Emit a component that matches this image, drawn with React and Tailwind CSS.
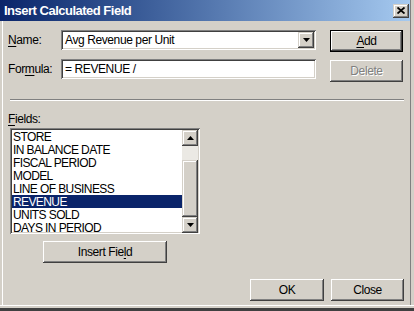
import React from 'react'

const raised = 'shadow-[inset_-1px_-1px_#404040,inset_1px_1px_#fff,inset_-2px_-2px_#808080]'
const raisedDefault = 'shadow-[inset_0_0_0_1px_#000,inset_-2px_-2px_#404040,inset_2px_2px_#fff,inset_-3px_-3px_#808080]'
const sunken = 'shadow-[inset_1px_1px_#808080,inset_-1px_-1px_#fff,inset_2px_2px_#404040,inset_-2px_-2px_#d4d0c8]'
const scrollBtn = 'shadow-[inset_-1px_-1px_#404040,inset_1px_1px_#d4d0c8,inset_-2px_-2px_#808080,inset_2px_2px_#fff]'

function Btn({ children, className = '', isDefault, disabled }) {
  return (
    <button
      className={`flex items-center justify-center bg-[#d4d0c8] text-[12px] tracking-[-0.4px] leading-none ${isDefault ? raisedDefault : raised} ${disabled ? 'text-[#808080] [text-shadow:1px_1px_0_#fff]' : 'text-black'} ${className}`}
    >
      {children}
    </button>
  )
}

function Arrow({ dir }) {
  return (
    <svg width="7" height="4" viewBox="0 0 7 4">
      {dir === 'up' ? <path d="M3.5 0 L7 4 L0 4 Z" fill="#000" /> : <path d="M0 0 L7 0 L3.5 4 Z" fill="#000" />}
    </svg>
  )
}

const fields = ['STORE', 'IN BALANCE DATE', 'FISCAL PERIOD', 'MODEL', 'LINE OF BUSINESS', 'REVENUE', 'UNITS SOLD', 'DAYS IN PERIOD']

export default function App() {
  return (
    <div className="w-[414px] h-[311px] overflow-hidden bg-[#d4d0c8] font-['Liberation_Sans',Arial,sans-serif] text-black shadow-[inset_0_-3px_#404040,inset_0_-5px_#d4d0c8,inset_0_-6px_#fff,inset_-3px_0_#d4d0c8,inset_-4px_0_#808080,inset_2px_0_#d4d0c8,inset_3px_0_#fff]">
      {/* Title bar */}
      <div className="h-[21px] mr-[4px] flex items-center justify-between bg-gradient-to-r from-[#0a246a] to-[#a6caf0] pl-[4px] pr-[1px]">
        <span className="text-white font-bold text-[13px] tracking-[-0.5px] leading-none">Insert Calculated Field</span>
        <div className={`w-[16px] h-[14px] flex items-center justify-center bg-[#d4d0c8] ${scrollBtn}`}>
          <svg width="8" height="7" viewBox="0 0 8 7">
            <path d="M0.5 0.5 L7.5 6.5 M7.5 0.5 L0.5 6.5" stroke="#000" strokeWidth="1.8" />
          </svg>
        </div>
      </div>

      <div className="pl-[8px] pr-[10px] pt-[9px] text-[12px] tracking-[-0.4px]">
        {/* Name row */}
        <div className="flex items-start">
          <div className="w-[53px] h-[20px] flex items-center">
            <span><u className="underline-offset-[2px]">N</u>ame:</span>
          </div>
          <div className={`w-[255px] h-[20px] bg-white flex items-center justify-between pl-[4px] pr-[2px] ${sunken}`}>
            <span>Avg Revenue per Unit</span>
            <div className={`w-[16px] h-[16px] flex items-center justify-center bg-[#d4d0c8] ${scrollBtn}`}>
              <Arrow dir="down" />
            </div>
          </div>
          <Btn isDefault className="ml-[14px] w-[73px] h-[22px]">
            <span><u className="underline-offset-[2px]">A</u>dd</span>
          </Btn>
        </div>

        {/* Formula row */}
        <div className="flex items-start mt-[7px]">
          <div className="w-[53px] h-[20px] flex items-center">
            <span>For<u className="underline-offset-[2px]">m</u>ula:</span>
          </div>
          <div className={`w-[255px] h-[20px] bg-white flex items-center pl-[4px] ${sunken}`}>
            <span>= REVENUE /</span>
          </div>
          <Btn disabled className="ml-[14px] mt-[1px] w-[73px] h-[22px]">
            Delete
          </Btn>
        </div>

        {/* Separator */}
        <div className="mt-[17px] ml-[2px] w-[394px] border-t border-t-[#808080] border-b border-b-white" />

        {/* Fields */}
        <div className="mt-[11px] h-[13px] flex items-center">
          <span><u className="underline-offset-[2px]">F</u>ields:</span>
        </div>
        <div className={`mt-[3px] ml-[2px] w-[190px] h-[106px] bg-white p-[2px] flex overflow-hidden ${sunken}`}>
          <div className="w-[170px] flex flex-col">
            {fields.map((f) => (
              <div
                key={f}
                className={`h-[13px] shrink-0 flex items-center pl-[1px] leading-none tracking-[-0.6px] ${f === 'REVENUE' ? 'bg-[#0a246a] text-white' : ''}`}
              >
                {f}
              </div>
            ))}
          </div>
          <div className="w-[16px] flex flex-col">
            <div className={`h-[16px] shrink-0 flex items-center justify-center bg-[#d4d0c8] ${scrollBtn}`}>
              <Arrow dir="up" />
            </div>
            <div className="h-[14px] shrink-0 bg-[#ebe9e4]" />
            <div className={`h-[57px] shrink-0 bg-[#d4d0c8] ${scrollBtn}`} />
            <div className={`h-[16px] shrink-0 flex items-center justify-center bg-[#d4d0c8] ${scrollBtn}`}>
              <Arrow dir="down" />
            </div>
          </div>
        </div>

        <Btn className="mt-[7px] ml-[35px] w-[124px] h-[22px]">
          <span>Insert Fie<u className="underline-offset-[2px]">l</u>d</span>
        </Btn>

        {/* Bottom buttons */}
        <div className="mt-[16px] flex justify-end gap-[7px]">
          <Btn className="w-[74px] h-[22px]">OK</Btn>
          <Btn className="w-[73px] h-[22px]">Close</Btn>
        </div>
      </div>
    </div>
  )
}
